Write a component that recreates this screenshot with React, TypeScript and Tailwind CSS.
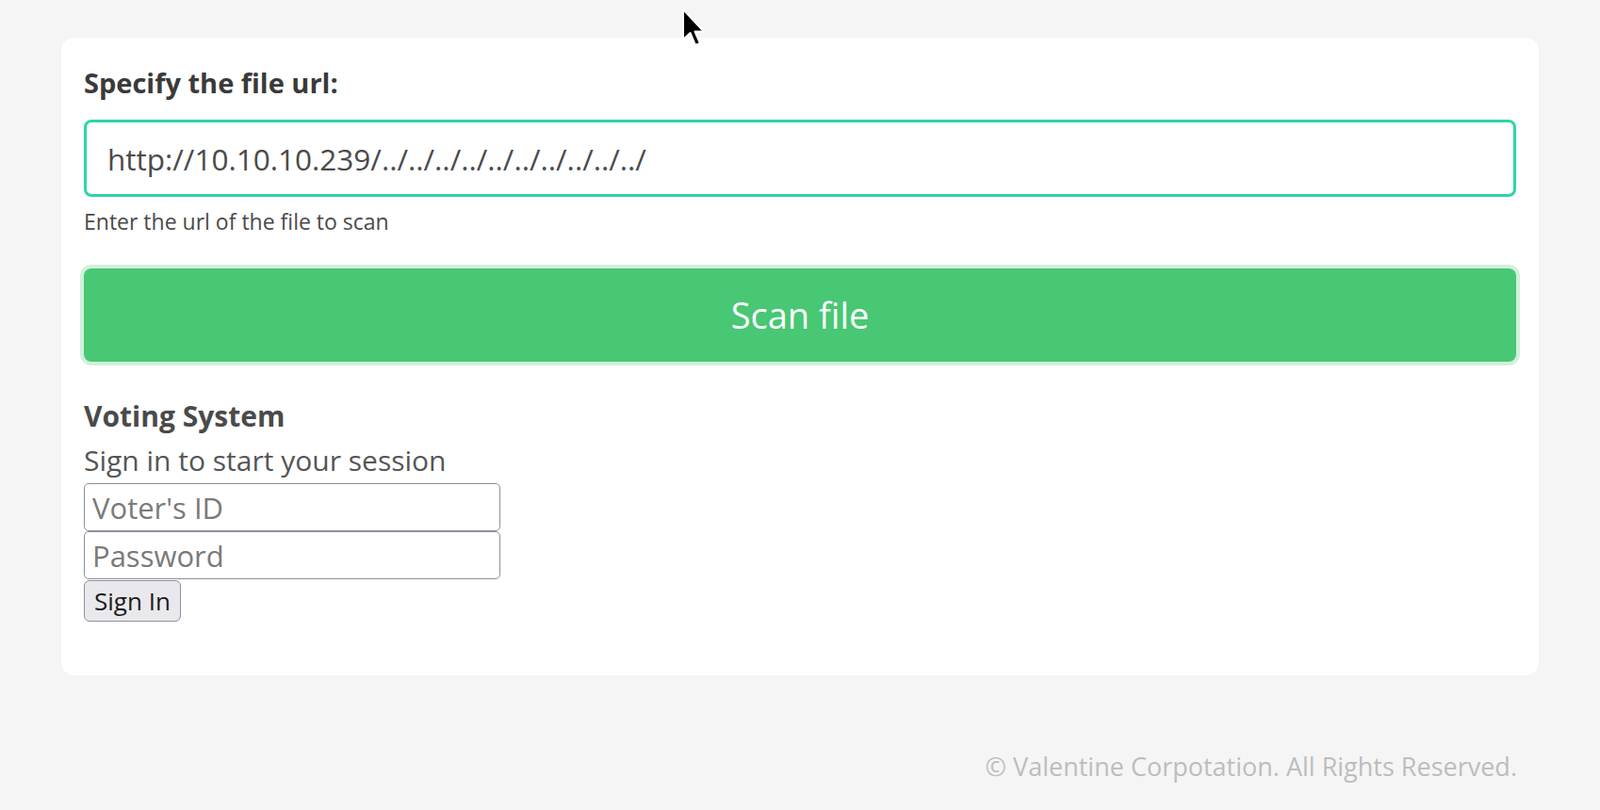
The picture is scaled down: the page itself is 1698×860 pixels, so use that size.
import { useState } from 'react'

// Scanner page: url field, scan button and the small voting sign-in form below it

function Cursor() {
  return (
    <svg
      className="absolute left-[722px] top-[8px]"
      width="28"
      height="44"
      viewBox="0 0 28 44"
    >
      <path
        d="M3 2 L3 34 L10.5 27 L16 40 L21 38 L15.5 25.5 L25 25.5 Z"
        fill="#000"
        stroke="#fff"
        strokeWidth="2"
        strokeLinejoin="round"
      />
    </svg>
  )
}

export default function App() {
  const [url, setUrl] = useState('http://10.10.10.239/../../../../../../../../../../')

  return (
    <div
      className="relative min-h-[860px] w-full bg-[#f5f5f5] pt-[40px]"
      style={{ fontFamily: '"Open Sans", "Noto Sans", sans-serif' }}
    >
      <Cursor />

      {/* ── Card ─────────────────────────────────────────────── */}
      <div className="mx-auto w-[1568px] rounded-[14px] bg-white px-[24px] pt-[30px] pb-[57px]">
        <label className="block text-[29px] font-bold leading-[36px] text-[#3a3a3a]">
          Specify the file url:
        </label>

        <input
          value={url}
          onChange={e => setUrl(e.target.value)}
          className="mt-[21px] block h-[82px] w-full rounded-[8px] border-[3px] border-[#2fd4a9] bg-white px-[22px] text-[31.5px] text-[#4a4a4a] outline-none"
        />
        <p className="mt-[12px] text-[23px] leading-[28px] text-[#4a4a4a]">
          Enter the url of the file to scan
        </p>

        <button className="mt-[36px] flex h-[99px] w-full items-center justify-center rounded-[8px] bg-[#48c774] text-[38px] text-white shadow-[0_0_0_4px_rgba(72,199,116,0.25)]">
          Scan file
        </button>

        {/* Voting form */}
        <div className="mt-[35px]">
          <div className="text-[30px] font-bold leading-[46px] text-[#4a4a4a]">Voting System</div>
          <div className="text-[30px] leading-[48px] text-[#555]">Sign in to start your session</div>
          <input
            placeholder="Voter's ID"
            className="block h-[51px] w-[442px] rounded-[5px] border-[1.5px] border-[#8f8f9d] bg-white px-[8px] text-[31px] text-[#333] outline-none placeholder:text-[#7a7a7a]"
          />
          <input
            type="password"
            placeholder="Password"
            className="block h-[51px] w-[442px] rounded-[5px] border-[1.5px] border-[#8f8f9d] bg-white px-[8px] text-[31px] text-[#333] outline-none placeholder:text-[#7a7a7a]"
          />
          <button className="mt-[1px] block h-[44px] rounded-[6px] border-[1.5px] border-[#8f8f9d] bg-[#e9e9ed] px-[10px] text-[26px] leading-none text-[#1b1b1b]">
            Sign In
          </button>
        </div>
      </div>

      {/* ── Footer ───────────────────────────────────────────── */}
      <div className="mt-[78px] flex justify-end pr-[88px]">
        <p className="text-[27px] leading-[38px] text-[#bdbdbd]">
          © Valentine Corpotation. All Rights Reserved.
        </p>
      </div>
    </div>
  )
}
